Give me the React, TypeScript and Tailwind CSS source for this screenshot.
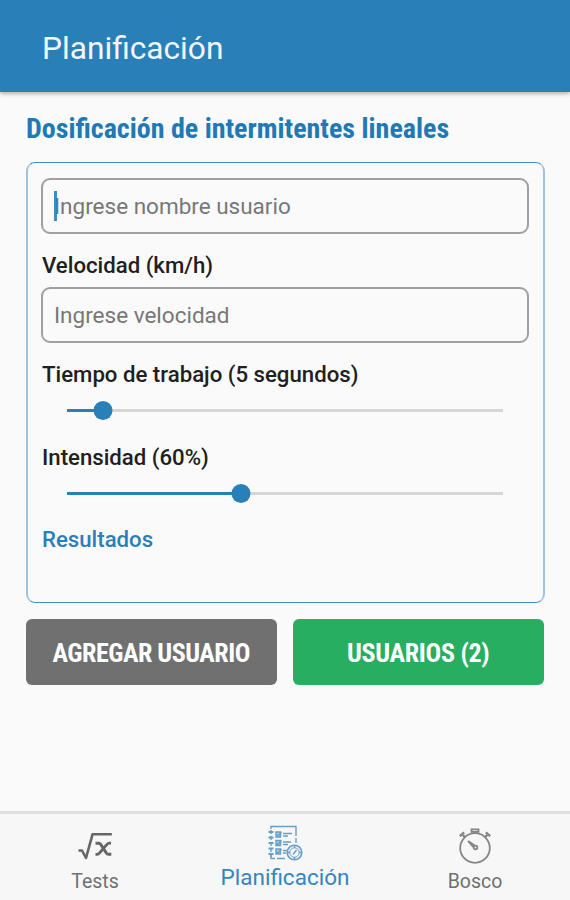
import type { ReactNode } from 'react';

type FieldProps = {
  placeholder: string;
  focused?: boolean;
};

const Field = ({ placeholder, focused }: FieldProps) => (
  <div className="relative h-14 w-[488px]">
    <input
      type="text"
      placeholder={placeholder}
      className="h-full w-full rounded-[9px] border-2 border-[#a0a0a0] bg-transparent pr-3 pl-[11px] text-[22.5px] outline-none placeholder:text-[#777777]"
    />
    {focused && <span className="absolute top-[13px] left-[13px] h-[30px] w-[3px] bg-[#2980b9]/90" />}
  </div>
);

const Slider = ({ value }: { value: number }) => (
  <div className="relative ml-[25px] flex h-5 w-[436px] items-center">
    <div className="h-[3px] w-full bg-[#d6d6d6]">
      <div className="h-full bg-[#2980b9]" style={{ width: `${value}%` }} />
    </div>
    <span className="absolute size-[19px] -translate-x-1/2 rounded-full bg-[#2980b9]" style={{ left: `${value}%` }} />
  </div>
);

const RootIcon = () => (
  <svg className="h-[30px] w-[36px]" viewBox="0 0 36 30" fill="none" stroke="#666666">
    <path d="M1.500 18.500H5l4 7.500L15.600 2.200h19.200" strokeWidth="2.600" strokeLinejoin="round" />
    <path d="M18.500 11.200h3.300c1 0 1.500.5 2 1.300l5.500 8.500c.6.900 1.100 1.300 2 1.300h3" strokeWidth="3" />
    <path d="M34 11.200h-1.700c-1 0-1.600.4-2.300 1.200L22.500 21c-.8.900-1.300 1.300-2.300 1.300h-1.700" strokeWidth="2.800" />
  </svg>
);

const PlanIcon = () => (
  <svg className="h-[36px] w-[36px]" viewBox="0 0 36 36" fill="none" stroke="#659fc9" strokeWidth="1.4">
    <path d="M4 4V1.500h25V11M29 13v5M4 30v3.500h4M10 33.500h8" />
    <path d="M4 5v27" strokeDasharray="4 2" />
    <path d="M1.500 7h5M1.500 12.500h5M1.500 18h5M1.500 23.500h5M1.500 29h5" strokeWidth="1.800" />
    <path d="M9 7h4.500v5H9zM9 15.500h4.500v5H9zM9 24h4.500v5H9z" fill="#b5d0e5" />
    <path d="m9.500 9.500 1.500 1.500 3.500-4M9.500 18l1.500 1.500 3.500-4M9.500 26.500 11 28l3.500-4" />
    <path d="M16 8.500h9M16 11h5M16 17h8M16 19.500h5M16 25.500h4M16 28h3" />
    <circle cx="27.500" cy="27.500" r="7.300" strokeWidth="1.600" />
    <circle cx="27.500" cy="27.500" r="4.700" strokeWidth="1" />
    <path d="m26 29.500 3.500-4.500M27.500 21v2M27.500 32v2M21 27.500h2M32 27.500h2" />
  </svg>
);

const StopwatchIcon = () => (
  <svg className="h-[36px] w-[34px]" viewBox="0 0 34 36" fill="none" stroke="#858585" strokeWidth="1.8">
    <circle cx="17" cy="20" r="14.800" />
    <path d="M13.500 1.300h7v2.500h-7zM15.500 3.500v2M18.500 3.500v2" />
    <path d="m1.800 8.200 4.400-3.700M4.200 6.200l3 3.200M32.200 8.200l-4.400-3.700M29.800 6.200l-3 3.200" strokeWidth="2.400" />
    <circle cx="17.500" cy="19.500" r="1.800" />
    <path d="m10 13 6.500 4.300M10 13l5.200 6" />
  </svg>
);

const NavItem = ({ icon, children }: { icon: ReactNode; children: ReactNode }) => (
  <div className="flex w-[190px] flex-col items-center">
    {icon}
    {children}
  </div>
);

const App = () => (
  <div className="flex h-[900px] w-[570px] flex-col overflow-hidden bg-[#fafafa] font-['Roboto',sans-serif] text-[#202020]">
    <header className="z-10 flex h-[92px] shrink-0 items-center bg-[#2980b9] pt-[6px] pl-[42px] shadow-[0_1px_5px_rgba(0,0,0,0.4)]">
      <h1 className="text-[31.7px] leading-9 text-[#f2f7fb]">Planificación</h1>
    </header>

    <main className="flex flex-1 flex-col px-[26px] pt-[21px]">
      <h2 className="h-[49px] text-[28px] leading-8 font-bold whitespace-nowrap text-[#2079b4] [font-stretch:75%]">
        Dosificación de intermitentes lineales
      </h2>

      <section className="flex h-[441px] w-[519px] flex-col rounded-[9px] border-x-2 border-y border-x-[#9fc3de] border-y-[#3f8dc1] pt-[15px] pl-[13px]">
        <Field placeholder="Ingrese nombre usuario" focused />
        <p className="mt-[16px] mb-[7px] pl-px text-[22.2px] leading-[30px] font-medium">Velocidad (km/h)</p>
        <Field placeholder="Ingrese velocidad" />
        <p className="mt-[16px] pl-px text-[22.2px] leading-[30px] font-medium">Tiempo de trabajo (5 segundos)</p>
        <div className="mt-[11px] pl-px"><Slider value={8.3} /></div>
        <p className="mt-[22px] pl-px text-[22.2px] leading-[30px] font-medium">Intensidad (60%)</p>
        <div className="mt-[11px] pl-px"><Slider value={40} /></div>
        <p className="mt-[21px] pl-px text-[22.2px] leading-[30px] font-medium text-[#2980b9]">Resultados</p>
      </section>

      <div className="mt-4 flex gap-4">
        <button className="h-[66px] w-[251px] rounded-md bg-[#707070] pt-[3px] text-[26px] font-bold tracking-[-0.5px] whitespace-nowrap text-white [font-stretch:75%]">
          AGREGAR USUARIO
        </button>
        <button className="h-[66px] w-[252px] rounded-md bg-[#27ae60] pt-[3px] text-[26px] font-bold tracking-[-0.3px] whitespace-nowrap text-white [font-stretch:75%]">
          USUARIOS (2)
        </button>
      </div>
    </main>

    <nav className="flex h-[89px] shrink-0 border-t-[3px] border-[#dfdfdf] bg-[#f7f7f7]">
      <NavItem icon={<div className="mt-[18px] h-[38px]"><RootIcon /></div>}>
        <span className="text-[19.500px] leading-6 text-[#707070]">Tests</span>
      </NavItem>
      <NavItem icon={<div className="mt-[11px] h-[38px]"><PlanIcon /></div>}>
        <span className="text-[22.5px] leading-7 text-[#3685bd]">Planificación</span>
      </NavItem>
      <NavItem icon={<div className="mt-[14px] h-[42px]"><StopwatchIcon /></div>}>
        <span className="text-[19.5px] leading-6 text-[#707070]">Bosco</span>
      </NavItem>
    </nav>
  </div>
);

export default App;
